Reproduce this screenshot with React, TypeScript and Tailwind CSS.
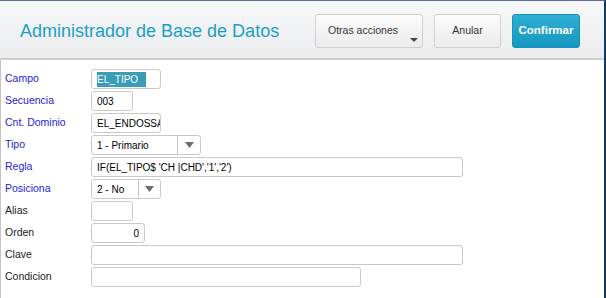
const labelBlue = "text-[#2323d8]";

function Field({ label, blue, children }: { label: string; blue?: boolean; children: React.ReactNode }) {
  return (
    <div className="flex items-center h-5">
      <div className={`w-[86px] shrink-0 text-[10.5px] ${blue ? labelBlue : "text-[#222]"}`}>{label}</div>
      {children}
    </div>
  );
}

function Box({ w, children, right }: { w: string; children?: React.ReactNode; right?: boolean }) {
  return (
    <div
      className={`${w} h-5 border border-[#c8c8c8] rounded-[3px] bg-white flex items-center px-[5px] text-[10px] text-black overflow-hidden whitespace-nowrap ${right ? "justify-end" : ""}`}
    >
      {children}
    </div>
  );
}

function Select({ w, divider, value }: { w: string; divider: string; value: string }) {
  return (
    <div className={`${w} h-5 border border-[#c8c8c8] rounded-[3px] bg-white flex text-[10px] text-black`}>
      <div className={`${divider} flex items-center px-[5px] border-r border-[#c8c8c8]`}>{value}</div>
      <div className="flex-1 flex items-center justify-center">
        <svg width="9" height="6" viewBox="0 0 9 6">
          <path d="M0 0h9L4.5 6z" fill="#6b6b6b" />
        </svg>
      </div>
    </div>
  );
}

export default function App() {
  return (
    <div
      className="w-[606px] h-[298px] bg-white border-t border-t-[#5b6a9c] border-r-2 border-r-[#123a66] flex flex-col overflow-hidden"
      style={{ fontFamily: '"Liberation Sans", Arial, sans-serif' }}
    >
      <div className="h-[59px] shrink-0 bg-gradient-to-b from-[#f6f7f7] to-[#ebecee] border-b-2 border-[#cfcfcf] flex items-center pl-5 pr-[24px]">
        <h1 className="text-[18px] text-[#1a9fc8] leading-none flex-1 pt-[2px]">Administrador de Base de Datos</h1>
        <div className="flex gap-[11px] items-center pt-[2px]">
          <button className="relative w-[108px] h-[34px] rounded-[3px] border border-[#d0d0d0] bg-gradient-to-b from-[#fbfbfb] to-[#ececec] text-[10.5px] text-[#333] text-left pl-[12px] pt-[1px]">
            Otras acciones
            <svg className="absolute right-[4px] bottom-[5px]" width="8" height="4" viewBox="0 0 8 4">
              <path d="M0 0h8L4 4z" fill="#444" />
            </svg>
          </button>
          <button className="w-[67px] h-[34px] rounded-[3px] border border-[#d0d0d0] bg-gradient-to-b from-[#fbfbfb] to-[#ececec] text-[10.5px] text-[#333]">
            Anular
          </button>
          <button className="w-[68px] h-[34px] rounded-[3px] border border-[#1792b8] bg-gradient-to-b from-[#2eafd3] to-[#1597c0] text-[11.5px] font-bold text-white">
            Confirmar
          </button>
        </div>
      </div>
      <div className="flex-1 border-l border-[#c4c4c4] pl-[4px] pt-[9px] flex flex-col gap-[2px]">
        <Field label="Campo" blue>
          <Box w="w-[70px]">
            <span className="bg-[#3a9db8] text-white pr-[8px]">EL_TIPO</span>
          </Box>
        </Field>
        <Field label="Secuencia" blue>
          <Box w="w-[42px]">003</Box>
        </Field>
        <Field label="Cnt. Dominio" blue>
          <Box w="w-[70px]">EL_ENDOSSA</Box>
        </Field>
        <Field label="Tipo" blue>
          <Select w="w-[110px]" divider="w-[86px]" value="1 - Primario" />
        </Field>
        <Field label="Regla" blue>
          <Box w="w-[372px]">IF(EL_TIPO$ 'CH |CHD','1','2')</Box>
        </Field>
        <Field label="Posiciona" blue>
          <Select w="w-[70px]" divider="w-[47px]" value="2 - No" />
        </Field>
        <Field label="Alias">
          <Box w="w-[42px]" />
        </Field>
        <Field label="Orden">
          <Box w="w-[54px]" right>0</Box>
        </Field>
        <Field label="Clave">
          <Box w="w-[372px]" />
        </Field>
        <Field label="Condicion">
          <Box w="w-[270px]" />
        </Field>
      </div>
    </div>
  );
}
